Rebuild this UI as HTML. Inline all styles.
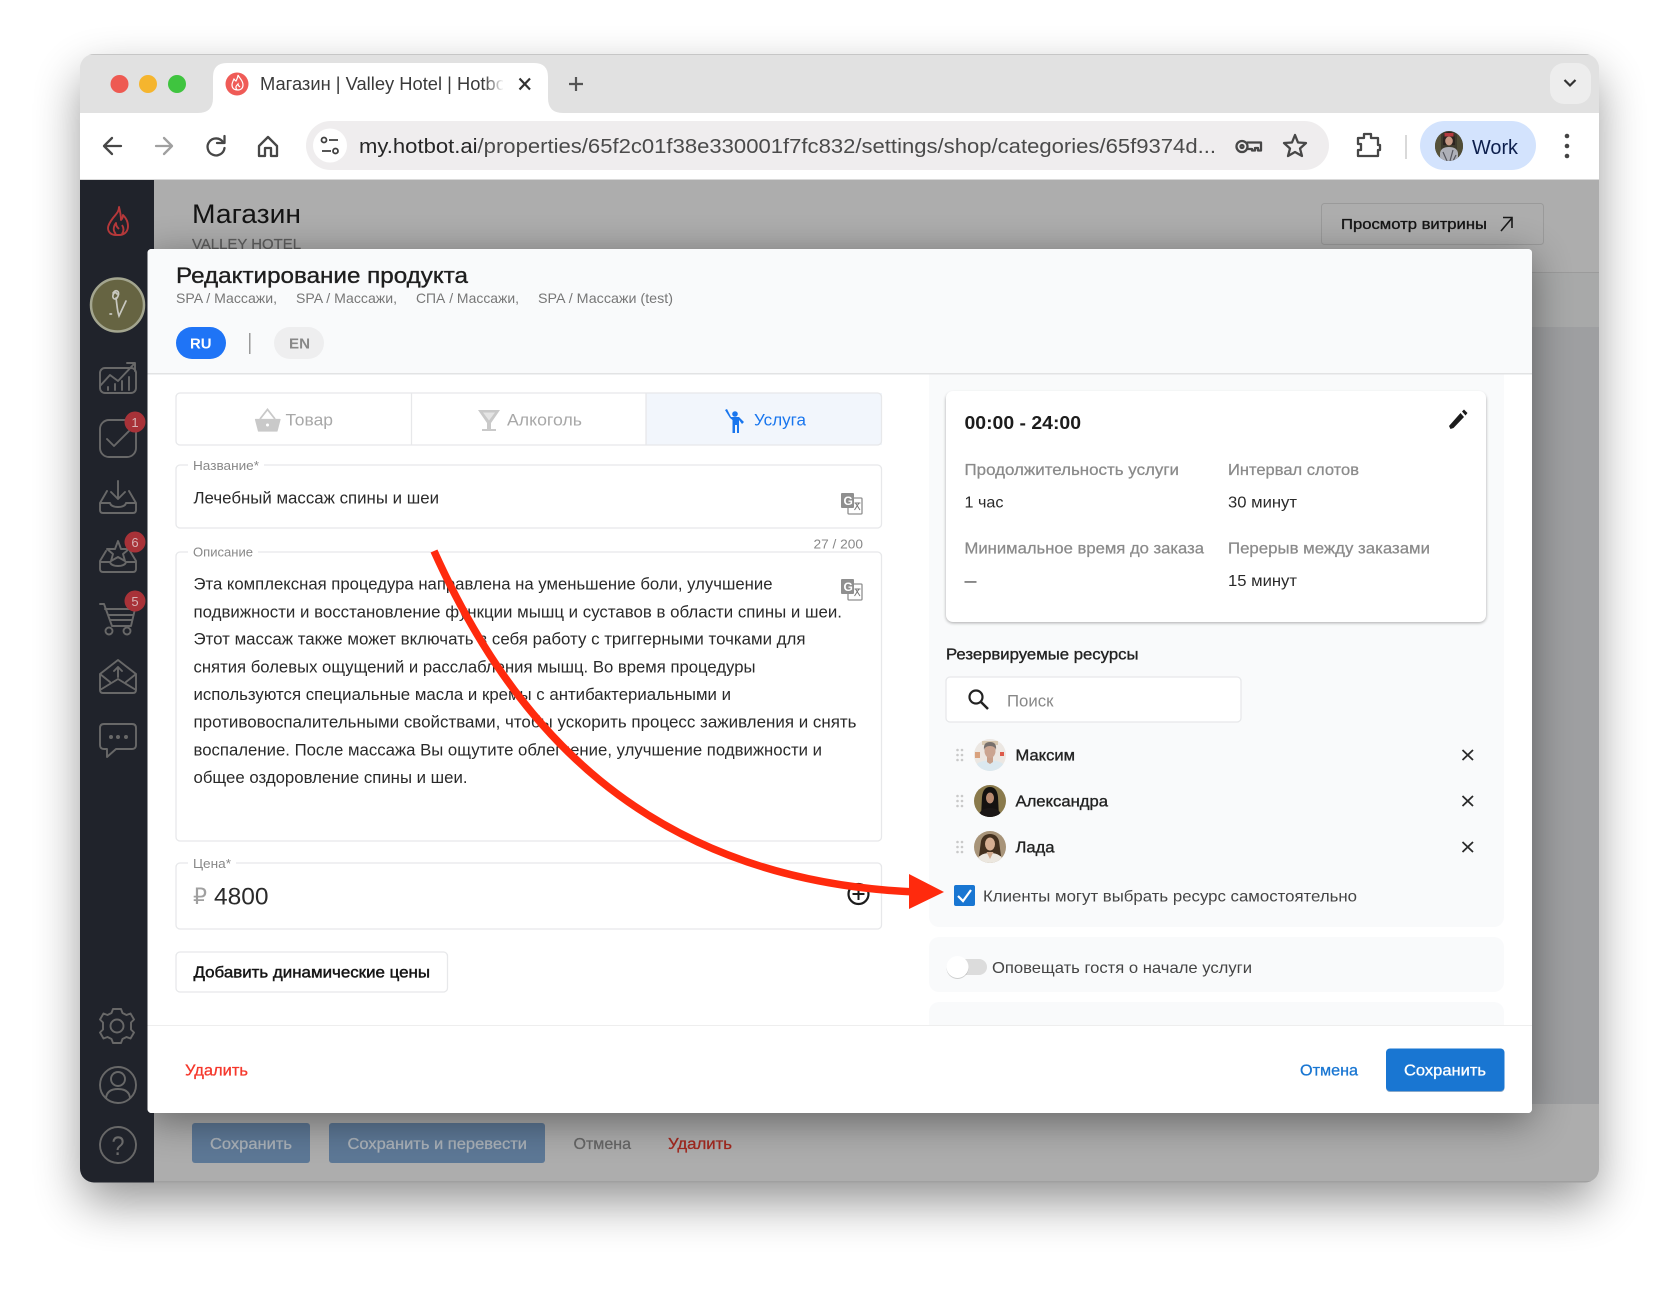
<!DOCTYPE html>
<html lang="ru"><head><meta charset="utf-8"><title>Магазин</title>
<style>
html,body{margin:0;padding:0;background:#fff}
svg{display:block}
text{font-family:"Liberation Sans","DejaVu Sans",sans-serif;white-space:pre}
.ic{fill:none;stroke:#686868;stroke-width:1.9;stroke-linecap:round;stroke-linejoin:round}
.ch{fill:none;stroke:#474747;stroke-width:2.3;stroke-linecap:round;stroke-linejoin:round}
.d{fill:#222}
.m{fill:#222;stroke:#222;stroke-width:.35}
.g{fill:#8a8a8a}
.gm{fill:#8a8a8a;stroke:#8a8a8a;stroke-width:.25}
</style></head><body>
<svg xmlns="http://www.w3.org/2000/svg" width="1680" height="1289" viewBox="0 0 1680 1289">
<defs>
<filter id="ws" filterUnits="userSpaceOnUse" x="0" y="0" width="1680" height="1289"><feGaussianBlur stdDeviation="24"/></filter>
<filter id="ds" filterUnits="userSpaceOnUse" x="0" y="150" width="1680" height="1139"><feGaussianBlur stdDeviation="20"/></filter>
<filter id="cs" filterUnits="userSpaceOnUse" x="900" y="350" width="640" height="320"><feGaussianBlur stdDeviation="1.6"/></filter>
<clipPath id="win"><rect x="80" y="54" width="1519" height="1128.500" rx="14"/></clipPath>
<clipPath id="tabc"><rect x="255" y="60" width="248" height="45"/></clipPath>
<clipPath id="a1"><circle cx="990" cy="755" r="16"/></clipPath>
<clipPath id="a2"><circle cx="990" cy="801" r="16"/></clipPath>
<clipPath id="a3"><circle cx="990" cy="847" r="16"/></clipPath>
<clipPath id="a4"><ellipse cx="1449" cy="146" rx="14" ry="15"/></clipPath>
<clipPath id="dl"><rect x="147.500" y="249" width="1384.500" height="864" rx="4"/></clipPath>
<linearGradient id="fade" x1="0" x2="1" y1="0" y2="0"><stop offset="0" stop-color="#fff" stop-opacity="0"/><stop offset="1" stop-color="#fff"/></linearGradient>
</defs>

<!-- window shadow -->
<rect x="82" y="76" width="1515" height="1126" rx="14" fill="#000" opacity=".42" filter="url(#ws)"/>

<g clip-path="url(#win)">
<rect x="80" y="54" width="1519" height="59" fill="#e1e1e1"/>
<rect x="80" y="54" width="1519" height="1" fill="#c6c6c6"/>
<rect x="80" y="113" width="1519" height="67" fill="#fff"/>
<rect x="80" y="179" width="1519" height="1" fill="#d9d9d9"/>
<!-- page -->
<rect x="80" y="180" width="1519" height="92" fill="#adadad"/>
<rect x="80" y="272" width="1519" height="1" fill="#9b9b9b"/>
<rect x="80" y="273" width="1519" height="54" fill="#a8a9a9"/>
<rect x="80" y="327" width="1519" height="777" fill="#9e9fa1"/>
<rect x="80" y="1104" width="1519" height="79" fill="#adadad"/>
<rect x="80" y="1181" width="1519" height="2" fill="#a0a0a0"/>

<text x="192" y="223" font-size="27" fill="#141414" textLength="109" lengthAdjust="spacingAndGlyphs">Магазин</text>
<text x="192" y="249" font-size="15" fill="#5e5e5e" stroke="#5e5e5e" stroke-width=".25" textLength="109" lengthAdjust="spacingAndGlyphs">VALLEY HOTEL</text>
<rect x="1321.500" y="203.500" width="222" height="41" rx="3" fill="none" stroke="#9a9a9a"/>
<text x="1341" y="229" font-size="15" class="m" style="fill:#161616;stroke:#161616" textLength="146" lengthAdjust="spacingAndGlyphs">Просмотр витрины</text>
<path d="M1501 231 L1512 218 M1503 217.500 H1512 V228" fill="none" stroke="#1a1a1a" stroke-width="1.600"/>

<!-- bottom buttons of page -->
<rect x="192" y="1123" width="118" height="40" rx="3" fill="#5d7896"/>
<rect x="329" y="1123" width="216" height="40" rx="3" fill="#5d7896"/>
<text x="210" y="1149" font-size="16" fill="#aab1b8" stroke="#aab1b8" stroke-width=".3" textLength="82" lengthAdjust="spacingAndGlyphs">Сохранить</text>
<text x="347.500" y="1149" font-size="16" fill="#aab1b8" stroke="#aab1b8" stroke-width=".3" textLength="179.500" lengthAdjust="spacingAndGlyphs">Сохранить и перевести</text>
<text x="573.500" y="1149" font-size="16" fill="#666" stroke="#666" stroke-width=".25" textLength="57.500" lengthAdjust="spacingAndGlyphs">Отмена</text>
<text x="668" y="1149" font-size="16" fill="#a3281f" stroke="#a3281f" stroke-width=".3" textLength="64" lengthAdjust="spacingAndGlyphs">Удалить</text>

<!-- dialog shadow -->
<rect x="147" y="257" width="1385" height="864" fill="#000" opacity=".42" filter="url(#ds)"/>

<!-- sidebar -->
<rect x="80" y="180" width="74" height="1003" fill="#20232b"/>
<path d="M119 207 c0 5 -3 7 -6 11 c-3 4 -5 7 -5 10 c0 4 3 7 8 7 h3 c5 0 9 -3 9 -9 c0 -5 -3 -9 -5 -11 c0 3 -1 4 -2 5 c0 -5 -1 -9 -2 -13z M116 234 c-3 -3 -3 -7 0 -11 c0 3 1 4 3 6 M122 234 c2 -3 2 -6 0 -9" fill="none" stroke="#b5383a" stroke-width="1.900" stroke-linejoin="round"/>
<circle cx="117.500" cy="305" r="26.500" fill="#666442" stroke="#a3a58f" stroke-width="2.500"/>
<path d="M113 293 c3 -4 7 -2 5 3 c-2 5 -6 3 -5 -1 c1 -3 3 -3 4 -1 M116 298 c1 6 1 12 3 18 l7 -15 M110 314 h1.500" fill="none" stroke="#c8c8c0" stroke-width="1.700" stroke-linecap="round"/>

<g class="ic">
<!-- chart -->
<rect x="100" y="368" width="36" height="25" rx="5"/>
<path d="M100 386 L110 375 L118 381 L134 364 M127 363 H135 V371 M108 390 v-3 M115 390 v-6 M122 390 v-9 M129 390 v-13"/>
<!-- check -->
<rect x="100" y="420" width="36" height="37" rx="9"/>
<path d="M107 439 L114 446 L130 430"/>
<!-- inbox down -->
<path d="M118 481 V499 M111 492 L118 499 L125 492 M107 491 L100 503 V510 q0 3 3 3 H133 q3 0 3 -3 V503 L129 491 M100 503 H110 q1 4 8 4 q7 0 8 -4 H136"/>
<!-- inbox star -->
<path d="M118 541 L121 549 L129 549 L123 554 L125 561 L118 557 L111 561 L113 554 L107 549 L115 549 Z M106 551 L100 561 V569 q0 3 3 3 H133 q3 0 3 -3 V561 L130 551 M100 562 H110 q1 4 8 4 q7 0 8 -4 H136"/>
<!-- cart -->
<path d="M100 604 H104 L112 626 H131 L135 609 H105 M108 615 H133 M110 620 H132"/>
<circle cx="109" cy="631" r="3.500"/><circle cx="127" cy="631" r="3.500"/>
<!-- mail -->
<path d="M100 674 L118 660 L136 674 V690 q0 3 -3 3 H103 q-3 0 -3 -3 Z M100 690 L118 679 L136 690 M100 674 L110 682 M136 674 L126 682 M118 677 V667 M114 671 L118 667 L122 671"/>
<!-- chat -->
<path d="M104 724 H132 q4 0 4 4 V745 q0 4 -4 4 H116 L107 757 V749 H104 q-4 0 -4 -4 V728 q0 -4 4 -4 Z"/>
<!-- gear -->
<path d="M113 1009 h8 l1.500 4 4 2 4 -1.500 3.500 6 -3 3 v7 l3 3 -3.500 6 -4 -1.500 -4 2 -1.500 4 h-8 l-1.500 -4 -4 -2 -4 1.500 -3.500 -6 3 -3 v-7 l-3 -3 3.500 -6 4 1.500 4 -2 z"/>
<circle cx="117" cy="1026" r="6.500"/>
<!-- person -->
<circle cx="118" cy="1085" r="18"/><circle cx="118" cy="1079" r="7"/><path d="M106 1098 q1 -9 12 -9 q11 0 12 9"/>
<!-- help -->
<circle cx="118" cy="1145" r="18"/>
</g>
<text x="111.500" y="1155" font-size="27" fill="#6a6a6a" textLength="13" lengthAdjust="spacingAndGlyphs">?</text>
<circle cx="135" cy="422" r="10.500" fill="#a83238"/><text x="135" y="427" font-size="13" fill="#d8b4b6" text-anchor="middle">1</text>
<circle cx="135" cy="542" r="10.500" fill="#a83238"/><text x="135" y="547" font-size="13" fill="#d8b4b6" text-anchor="middle">6</text>
<circle cx="135" cy="601" r="10.500" fill="#a83238"/><text x="135" y="606" font-size="13" fill="#d8b4b6" text-anchor="middle">5</text>
<circle cx="111" cy="737" r="2" fill="#686868"/><circle cx="118" cy="737" r="2" fill="#686868"/><circle cx="126" cy="737" r="2" fill="#686868"/>

<!-- tab -->
<path d="M198 113 Q213 113 213 98 V77 Q213 63 227 63 H534 Q548 63 548 77 V98 Q548 113 563 113 Z" fill="#fff"/>
<circle cx="119.500" cy="84" r="9" fill="#ee5a52"/>
<circle cx="148" cy="84" r="9" fill="#f5b52e"/>
<circle cx="177" cy="84" r="9" fill="#3fc43f"/>
<circle cx="237" cy="84" r="11.500" fill="#ef5b57"/>
<path d="M238 75 c1 3 5 5 5 10 c0 3 -2 5 -5 5 c-4 0 -6 -2 -6 -5 c0 -2 1 -4 2 -6 c1 1 1 2 2 2 c1 -2 2 -4 2 -6z M237 90 c-2 -3 -1 -4 1 -6 c0 2 1 2 2 3" fill="none" stroke="#fff" stroke-width="1.200"/>
<g clip-path="url(#tabc)"><text x="260" y="90" font-size="18" fill="#3a3a3a" textLength="251" lengthAdjust="spacingAndGlyphs">Магазин | Valley Hotel | Hotbot</text></g>
<rect x="484" y="66" width="20" height="38" fill="url(#fade)"/>
<path d="M519.500 78.500 L530 89.500 M530 78.500 L519.500 89.500" stroke="#333" stroke-width="2.200" fill="none"/>
<path d="M576 77 V91 M569 84 H583" stroke="#555" stroke-width="2.200" fill="none"/>
<rect x="1550" y="63" width="41" height="41" rx="14" fill="#ededed"/>
<path d="M1564.500 80 L1570 85.500 L1575.500 80" fill="none" stroke="#333" stroke-width="2.200"/>

<!-- toolbar -->
<g class="ch">
<path d="M121 146 H104 M112 138 L104 146 L112 154"/>
<path d="M156 146 H172 M164 138 L172 146 L164 154" style="stroke:#a0a0a0"/>
<path d="M223 142 A8.500 8.500 0 1 0 224.500 148 M224.500 136 V143 H217"/>
<path d="M259 146 L268 137 L277 146 V156 H271 V148 H265 V156 H259 Z"/>
</g>
<rect x="306" y="121" width="1023" height="49" rx="24.500" fill="#efedee"/>
<circle cx="330" cy="145.500" r="17" fill="#fff"/>
<g fill="none" stroke="#3f3f3f" stroke-width="1.800"><circle cx="324" cy="140" r="2.500"/><path d="M329 140 H338 M322 151 H331"/><circle cx="335.500" cy="151" r="2.500"/></g>
<text x="359" y="153" font-size="20" textLength="857" lengthAdjust="spacingAndGlyphs"><tspan fill="#262626">my.hotbot.ai</tspan><tspan fill="#4a4a4a">/properties/65f2c01f38e330001f7fc832/settings/shop/categories/65f9374d...</tspan></text>
<g class="ch">
<circle cx="1242" cy="146.500" r="5.500"/><circle cx="1242" cy="146.500" r="1.500"/>
<path d="M1247.500 142.500 H1261 V150.500 H1258 V148 H1255 V150.500 H1252 V149 H1247"/>
<path d="M1295 135 L1298 142.500 L1306 143 L1300 148.500 L1302 156 L1295 152 L1288 156 L1290 148.500 L1284 143 L1292 142.500 Z"/>
<path d="M1358 138 H1364 V134 H1371 V138 H1378 V145 H1380 V150 H1378 V156 H1358 V150 H1361 V144 H1358 Z"/>
</g>
<rect x="1405" y="135" width="2" height="24" fill="#d9d9d9"/>
<rect x="1420" y="121" width="116" height="49" rx="24.500" fill="#d3e3fd"/>
<ellipse cx="1449" cy="146" rx="14" ry="15" fill="#3d3a2c"/>
<g clip-path="url(#a4)">
<rect x="1435" y="131" width="6" height="30" fill="#56523a"/><rect x="1457" y="131" width="7" height="30" fill="#4f4c36"/>
<path d="M1443 140 q0 -8 6 -8 q6 0 6 8 v5 h-12z" fill="#2c2420"/>
<ellipse cx="1449" cy="141" rx="3.800" ry="4.500" fill="#c79a85"/><rect x="1444.500" y="133" width="9" height="3.500" fill="#b43a3f"/>
<path d="M1440 161 V153 q1 -6 9 -6 q8 0 9 6 V161 Z" fill="#aeb0b8"/>
<path d="M1443 152 L1447 161 M1453 150 L1450 161 M1456 155 L1453 161" stroke="#55565e" stroke-width="1.200"/>
</g>
<text x="1472" y="154" font-size="20" fill="#0d1f4d" textLength="46" lengthAdjust="spacingAndGlyphs">Work</text>
<circle cx="1567" cy="136" r="2.300" fill="#444"/><circle cx="1567" cy="146" r="2.300" fill="#444"/><circle cx="1567" cy="156" r="2.300" fill="#444"/>
</g>

<!-- DIALOG -->
<g clip-path="url(#dl)">
<rect x="147" y="249" width="1385" height="864" fill="#fff"/>
<!-- right panel -->
<rect x="929" y="350" width="575" height="577" rx="10" fill="#f9fafb"/>
<rect x="929" y="937" width="575" height="55" rx="10" fill="#f9fafb"/>
<rect x="929" y="1002" width="575" height="40" rx="10" fill="#f9fafb"/>
<!-- header -->
<rect x="147" y="249" width="1385" height="124" fill="#f9fafb"/>
<rect x="147" y="373" width="1385" height="1.500" fill="#e2e3e4"/>
<text x="176" y="283" font-size="22" class="m" style="stroke:#1e1e1e;fill:#1e1e1e" textLength="292" lengthAdjust="spacingAndGlyphs">Редактирование продукта</text>
<text x="176" y="303" font-size="14" fill="#777" textLength="101" lengthAdjust="spacingAndGlyphs">SPA / Массажи,</text>
<text x="296" y="303" font-size="14" fill="#777" textLength="101" lengthAdjust="spacingAndGlyphs">SPA / Массажи,</text>
<text x="416" y="303" font-size="14" fill="#777" textLength="103" lengthAdjust="spacingAndGlyphs">СПА / Массажи,</text>
<text x="538" y="303" font-size="14" fill="#777" textLength="135" lengthAdjust="spacingAndGlyphs">SPA / Массажи (test)</text>
<rect x="176" y="327" width="50" height="32" rx="16" fill="#1f74f6"/>
<text x="190" y="348.500" font-size="15" fill="#fff" font-weight="bold" textLength="21.500" lengthAdjust="spacingAndGlyphs">RU</text>
<rect x="249" y="333" width="1.500" height="21" fill="#9a9a9a"/>
<rect x="274" y="327" width="50" height="32" rx="16" fill="#eeeeef"/>
<text x="289" y="348.500" font-size="15" fill="#888" font-weight="bold" textLength="21" lengthAdjust="spacingAndGlyphs">EN</text>

<!-- tabs -->
<rect x="646" y="393" width="236" height="52" fill="#f2f6fc"/>
<rect x="176" y="393" width="705.500" height="52" rx="4" fill="none" stroke="#e7e8ea" stroke-width="1.300"/>
<path d="M411.500 393 V445 M646 393 V445" stroke="#e7e8ea" stroke-width="1.300"/>
<path d="M255.500 419.500 H280 L277 431 H258.500 Z" fill="#c9c9c9" stroke="#c9c9c9" stroke-width="1.200" stroke-linejoin="round"/>
<path d="M260 419 L267.500 409.500 L275 419" fill="none" stroke="#c9c9c9" stroke-width="1.800"/>
<circle cx="267.500" cy="425" r="1.500" fill="#fff"/>
<text x="285.500" y="425.500" font-size="17" fill="#a8a8a8" textLength="47.500" lengthAdjust="spacingAndGlyphs">Товар</text>
<path d="M478 410 H500 L491 423 V429 H496 V431 H482 V429 H487 V423 Z" fill="#c9c9c9"/>
<path d="M483 412.500 H495 L489 420.500 Z" fill="#e4e4e4"/>
<text x="507" y="425.500" font-size="17" fill="#a8a8a8" textLength="75" lengthAdjust="spacingAndGlyphs">Алкоголь</text>
<circle cx="735" cy="414" r="2.800" fill="#1976ee"/>
<path d="M727 409 L731 417 H739 L744 422 L742 424 L739 420 L739 433 H737 V425 H735 V433 H732.500 V420 L730 418 L725 410 Z" fill="#1976ee"/>
<text x="754" y="425.500" font-size="17" fill="#1976ee" textLength="52" lengthAdjust="spacingAndGlyphs">Услуга</text>

<!-- name -->
<rect x="176" y="465" width="705.500" height="63" rx="4" fill="#fff" stroke="#e7e8ea" stroke-width="1.300"/>
<rect x="188" y="460" width="76" height="10" fill="#fff"/>
<text x="193" y="470" font-size="13" fill="#888" textLength="66" lengthAdjust="spacingAndGlyphs">Название*</text>
<text x="193.500" y="503.500" font-size="17" fill="#2a2a2a" textLength="245.500" lengthAdjust="spacingAndGlyphs">Лечебный массаж спины и шеи</text>
<rect x="848" y="498" width="14" height="16" rx="1" fill="#fff" stroke="#8f8f8f" stroke-width="1.300"/>
<path d="M854.500 503 h6 M859 503 l-4.500 7 M855.500 503 l4.500 7" stroke="#777" stroke-width="1" fill="none"/>
<rect x="841" y="493" width="13" height="15" rx="1" fill="#8f8f8f"/>
<text x="843.500" y="505" font-size="12" font-weight="bold" fill="#fff">G</text>
<text x="813.500" y="548.500" font-size="13" fill="#888" textLength="49.500" lengthAdjust="spacingAndGlyphs">27 / 200</text>

<!-- description -->
<rect x="176" y="552" width="705.500" height="289" rx="4" fill="#fff" stroke="#e7e8ea" stroke-width="1.300"/>
<rect x="188" y="548" width="70" height="8" fill="#fff"/>
<text x="193" y="556.500" font-size="13" fill="#888" textLength="60" lengthAdjust="spacingAndGlyphs">Описание</text>
<text x="193.500" y="589.500" font-size="16.500" fill="#2a2a2a" textLength="579" lengthAdjust="spacingAndGlyphs">Эта комплексная процедура направлена на уменьшение боли, улучшение</text>
<text x="193.500" y="617.500" font-size="16.500" fill="#2a2a2a" textLength="648.500" lengthAdjust="spacingAndGlyphs">подвижности и восстановление функции мышц и суставов в области спины и шеи.</text>
<text x="193.500" y="644.500" font-size="16.500" fill="#2a2a2a" textLength="612" lengthAdjust="spacingAndGlyphs">Этот массаж также может включать в себя работу с триггерными точками для</text>
<text x="193.500" y="672.500" font-size="16.500" fill="#2a2a2a" textLength="562" lengthAdjust="spacingAndGlyphs">снятия болевых ощущений и расслабления мышц. Во время процедуры</text>
<text x="193.500" y="700" font-size="16.500" fill="#2a2a2a" textLength="537.500" lengthAdjust="spacingAndGlyphs">используются специальные масла и кремы с антибактериальными и</text>
<text x="193.500" y="727.500" font-size="16.500" fill="#2a2a2a" textLength="663" lengthAdjust="spacingAndGlyphs">противовоспалительными свойствами, чтобы ускорить процесс заживления и снять</text>
<text x="193.500" y="755.500" font-size="16.500" fill="#2a2a2a" textLength="628.500" lengthAdjust="spacingAndGlyphs">воспаление. После массажа Вы ощутите облегчение, улучшение подвижности и</text>
<text x="193.500" y="783" font-size="16.500" fill="#2a2a2a" textLength="274" lengthAdjust="spacingAndGlyphs">общее оздоровление спины и шеи.</text>
<rect x="848" y="584" width="14" height="16" rx="1" fill="#fff" stroke="#8f8f8f" stroke-width="1.300"/>
<path d="M854.500 589 h6 M859 589 l-4.500 7 M855.500 589 l4.500 7" stroke="#777" stroke-width="1" fill="none"/>
<rect x="841" y="579" width="13" height="15" rx="1" fill="#8f8f8f"/>
<text x="843.500" y="591" font-size="12" font-weight="bold" fill="#fff">G</text>

<!-- price -->
<rect x="176" y="863" width="705.500" height="66" rx="4" fill="#fff" stroke="#e7e8ea" stroke-width="1.300"/>
<rect x="188" y="858" width="48" height="9" fill="#fff"/>
<text x="193" y="868" font-size="13" fill="#888" textLength="38" lengthAdjust="spacingAndGlyphs">Цена*</text>
<text x="193" y="904" font-size="22" fill="#a0a0a0" textLength="14" lengthAdjust="spacingAndGlyphs">₽</text>
<text x="214" y="904.500" font-size="24" fill="#2a2a2a" textLength="54.500" lengthAdjust="spacingAndGlyphs">4800</text>
<circle cx="858.500" cy="894" r="10" fill="none" stroke="#1c1c1c" stroke-width="2.200"/>
<path d="M858.500 888 V900 M852.500 894 H864.500" stroke="#1c1c1c" stroke-width="2"/>
<rect x="176" y="952" width="271.500" height="40" rx="4" fill="#fff" stroke="#e7e8ea" stroke-width="1.300"/>
<text x="193.500" y="977.500" font-size="16" class="m" style="fill:#151515;stroke:#151515;stroke-width:.45" textLength="236.500" lengthAdjust="spacingAndGlyphs">Добавить динамические цены</text>

<!-- card -->
<rect x="946" y="393" width="540" height="230" rx="7" fill="#000" opacity=".32" filter="url(#cs)"/>
<rect x="946" y="391" width="540" height="231" rx="7" fill="#fff"/>
<text x="964.500" y="429" font-size="18" font-weight="bold" fill="#1c1c1c" textLength="116.500" lengthAdjust="spacingAndGlyphs">00:00 - 24:00</text>
<path d="M1449 426 L1450.500 429 L1453.500 428 L1464 417 L1460.500 413 Z M1462 411.500 L1465.500 415.500 L1467.500 413 L1464 409.500 Z" fill="#1c1c1c"/>
<text x="964.500" y="475" font-size="16" class="gm" textLength="214.500" lengthAdjust="spacingAndGlyphs">Продолжительность услуги</text>
<text x="1228" y="475" font-size="16" class="gm" textLength="131" lengthAdjust="spacingAndGlyphs">Интервал слотов</text>
<text x="964.500" y="507.500" font-size="16" fill="#2a2a2a" textLength="39" lengthAdjust="spacingAndGlyphs">1 час</text>
<text x="1228" y="507.500" font-size="16" fill="#2a2a2a" textLength="69" lengthAdjust="spacingAndGlyphs">30 минут</text>
<text x="964.500" y="553.500" font-size="16" class="gm" textLength="239.500" lengthAdjust="spacingAndGlyphs">Минимальное время до заказа</text>
<text x="1228" y="553.500" font-size="16" class="gm" textLength="202" lengthAdjust="spacingAndGlyphs">Перерыв между заказами</text>
<text x="964.500" y="586" font-size="16" fill="#2a2a2a" textLength="12" lengthAdjust="spacingAndGlyphs">—</text>
<text x="1228" y="586" font-size="16" fill="#2a2a2a" textLength="69" lengthAdjust="spacingAndGlyphs">15 минут</text>

<text x="946" y="659.500" font-size="16" class="m" textLength="192.500" lengthAdjust="spacingAndGlyphs">Резервируемые ресурсы</text>
<rect x="946" y="677" width="295" height="45" rx="4" fill="#fff" stroke="#e7e8ea" stroke-width="1.300"/>
<circle cx="976" cy="697" r="6.500" fill="none" stroke="#222" stroke-width="2.200"/>
<path d="M981 702 L988 709" stroke="#222" stroke-width="2.500"/>
<text x="1007" y="706.500" font-size="17" fill="#888" textLength="46.500" lengthAdjust="spacingAndGlyphs">Поиск</text>

<!-- drag dots -->
<g fill="#c9c9c9">
<circle cx="957.500" cy="750" r="1.300"/><circle cx="962" cy="750" r="1.300"/><circle cx="957.500" cy="755" r="1.300"/><circle cx="962" cy="755" r="1.300"/><circle cx="957.500" cy="760" r="1.300"/><circle cx="962" cy="760" r="1.300"/>
<circle cx="957.500" cy="796" r="1.300"/><circle cx="962" cy="796" r="1.300"/><circle cx="957.500" cy="801" r="1.300"/><circle cx="962" cy="801" r="1.300"/><circle cx="957.500" cy="806" r="1.300"/><circle cx="962" cy="806" r="1.300"/>
<circle cx="957.500" cy="842" r="1.300"/><circle cx="962" cy="842" r="1.300"/><circle cx="957.500" cy="847" r="1.300"/><circle cx="962" cy="847" r="1.300"/><circle cx="957.500" cy="852" r="1.300"/><circle cx="962" cy="852" r="1.300"/>
</g>
<!-- avatars -->
<g clip-path="url(#a1)">
<rect x="974" y="739" width="32" height="32" fill="#ece7e2"/>
<rect x="975" y="752" width="5" height="6" fill="#d9a27e"/><rect x="1000" y="752" width="4" height="4" fill="#dd5a4a"/><rect x="982" y="741" width="16" height="4" fill="#d8c8b0"/>
<path d="M975 771 V766 q3 -5 15 -6 q12 1 15 6 V771 Z" fill="#dbe8ef"/>
<path d="M987 757 h6 v5 l-3 2 -3 -2z" fill="#c8a08a"/>
<ellipse cx="990" cy="751" rx="5.500" ry="7" fill="#cba591"/>
<path d="M984 750 q-1 -8 6 -8 q7 0 6 8 q-1 -4 -6 -4 q-5 0 -6 4z" fill="#77706c"/>
</g>
<g clip-path="url(#a2)">
<rect x="974" y="785" width="32" height="32" fill="#8a7a4c"/>
<path d="M981 817 L982 797 q1 -10 8 -10 q7 0 8 10 L999 817 Z" fill="#141210"/>
<ellipse cx="990" cy="798" rx="4" ry="5.500" fill="#b98b70"/>
<path d="M978 817 q2 -9 12 -9 q10 0 12 9 Z" fill="#1b1716"/>
</g>
<g clip-path="url(#a3)">
<rect x="974" y="831" width="32" height="32" fill="#a89479"/>
<path d="M979 856 L981 841 q2 -7 9 -7 q7 0 9 7 L1001 856 Z" fill="#43301f"/>
<ellipse cx="990" cy="844" rx="5" ry="6.500" fill="#d6ae92"/>
<path d="M976 863 q2 -10 14 -10 q12 0 14 10 Z" fill="#ece7df"/>
<path d="M986.500 852 L990 859 L993.500 852 Z" fill="#cfa88c"/>
</g>
<text x="1015.500" y="760.500" font-size="16" class="m" textLength="59.500" lengthAdjust="spacingAndGlyphs">Максим</text>
<text x="1015.500" y="806.500" font-size="16" class="m" textLength="92.500" lengthAdjust="spacingAndGlyphs">Александра</text>
<text x="1015.500" y="852.500" font-size="16" class="m" textLength="39" lengthAdjust="spacingAndGlyphs">Лада</text>
<path d="M1462.500 750 L1473 760 M1473 750 L1462.500 760 M1462.500 796 L1473 806 M1473 796 L1462.500 806 M1462.500 842 L1473 852 M1473 842 L1462.500 852" stroke="#2a2a2a" stroke-width="1.800" fill="none"/>
<rect x="954" y="885" width="21" height="21" rx="2" fill="#1976d2"/>
<path d="M958 896 L963 901 L971 890" fill="none" stroke="#fff" stroke-width="2.200"/>
<text x="983" y="901.500" font-size="16" fill="#444" textLength="374" lengthAdjust="spacingAndGlyphs">Клиенты могут выбрать ресурс самостоятельно</text>

<rect x="947" y="959" width="40" height="16" rx="8" fill="#dcdcdc"/>
<circle cx="957.500" cy="968" r="11" fill="#000" opacity=".18"/>
<circle cx="957.500" cy="967" r="11" fill="#fff"/>
<text x="992" y="973" font-size="16" fill="#444" textLength="260" lengthAdjust="spacingAndGlyphs">Оповещать гостя о начале услуги</text>

<!-- footer -->
<rect x="147" y="1025" width="1385" height="88" fill="#fff"/>
<rect x="147" y="1025" width="1385" height="1" fill="#eeeeee"/>
<text x="185" y="1075.500" font-size="16" fill="#f5382c" stroke="#f5382c" stroke-width=".3" textLength="63" lengthAdjust="spacingAndGlyphs">Удалить</text>
<text x="1300" y="1075.500" font-size="16" fill="#1976d2" stroke="#1976d2" stroke-width=".3" textLength="58" lengthAdjust="spacingAndGlyphs">Отмена</text>
<rect x="1386" y="1050" width="118.500" height="42" rx="4" fill="#8aa9c9"/>
<rect x="1386" y="1048.500" width="118.500" height="42.500" rx="4" fill="#1976d2"/>
<text x="1404" y="1075.500" font-size="16" fill="#fff" stroke="#fff" stroke-width=".3" textLength="82" lengthAdjust="spacingAndGlyphs">Сохранить</text>
</g>

<!-- red arrow -->
<path d="M434 551 C510 720 640 880 915 892" fill="none" stroke="#ff2a0d" stroke-width="7.500"/>
<path d="M909 874 L944 892 L909 909 Z" fill="#ff2a0d"/>
</svg>
</body></html>
